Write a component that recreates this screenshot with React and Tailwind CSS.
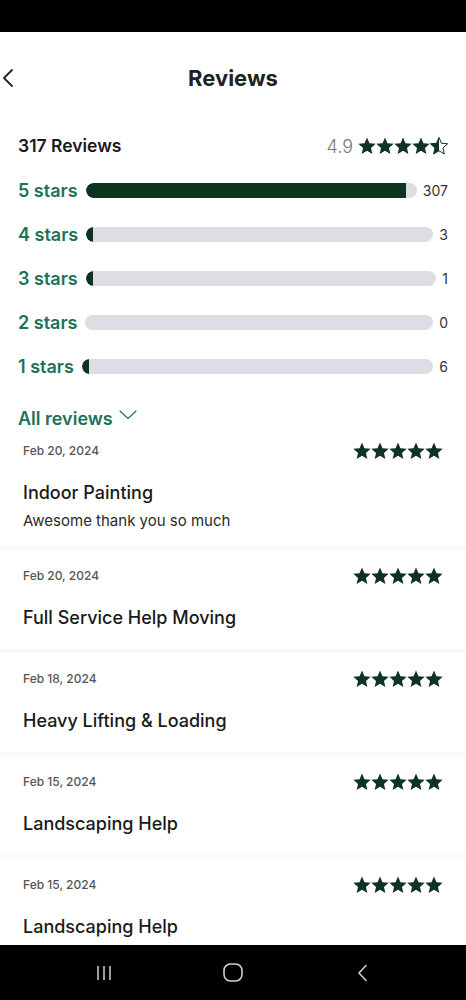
import React from 'react';

const STAR = 'M12 1.8l2.95 6.9 7.45.65-5.65 4.9 1.7 7.3L12 17.7l-6.45 3.85 1.7-7.3L1.6 9.35l7.45-.65z';

const Star = ({ size = 18, half = false, color = '#0e3321' }) => (
  <svg width={size} height={size} viewBox="1.2 1.2 21.6 21.6">
    {half ? (
      <>
        <defs>
          <clipPath id="leftHalf">
            <rect x="0" y="0" width="12" height="24" />
          </clipPath>
        </defs>
        <path d={STAR} fill="none" stroke={color} strokeWidth="1.2" strokeLinejoin="round" />
        <path d={STAR} fill={color} clipPath="url(#leftHalf)" />
      </>
    ) : (
      <path d={STAR} fill={color} />
    )}
  </svg>
);

const breakdown = [
  { label: '5 stars', count: 307 },
  { label: '4 stars', count: 3 },
  { label: '3 stars', count: 1 },
  { label: '2 stars', count: 0 },
  { label: '1 stars', count: 6 },
];

const reviews = [
  { date: 'Feb 20, 2024', title: 'Indoor Painting', body: 'Awesome thank you so much' },
  { date: 'Feb 20, 2024', title: 'Full Service Help Moving' },
  { date: 'Feb 18, 2024', title: 'Heavy Lifting & Loading' },
  { date: 'Feb 15, 2024', title: 'Landscaping Help' },
  { date: 'Feb 15, 2024', title: 'Landscaping Help' },
];

const total = 317;

export default function App() {
  return (
    <div
      className="w-[466px] h-[1000px] flex flex-col bg-white overflow-hidden"
      style={{ fontFamily: 'Inter, "Noto Sans", sans-serif' }}
    >
      {/* status bar */}
      <div className="h-[32px] bg-black shrink-0" />

      <div className="flex-1 overflow-hidden">
        {/* header */}
        <div className="h-[92px] flex items-center relative">
          <svg className="absolute left-[1px]" width="14" height="20" viewBox="0 0 14 20">
            <path d="M11 2 L3 10 L11 18" fill="none" stroke="#222" strokeWidth="1.8" strokeLinecap="round" strokeLinejoin="round" />
          </svg>
          <div className="w-full text-center text-[22px] font-bold text-[#222]">Reviews</div>
        </div>

        {/* summary */}
        <div className="px-[18px]">
          <div className="h-[44px] flex items-center justify-between">
            <span className="text-[17.5px] font-semibold text-[#1a1a1a]">317 Reviews</span>
            <div className="flex items-center gap-[5px]">
              <span className="text-[18px] font-light text-[#777]">4.9</span>
              <div className="flex">
                <Star size={18} />
                <Star size={18} />
                <Star size={18} />
                <Star size={18} />
                <Star size={18} half />
              </div>
            </div>
          </div>

          {breakdown.map(({ label, count }) => (
            <div key={label} className="h-[44px] flex items-center">
              <span className="text-[18px] font-semibold text-[#1d7256] mr-[8px]">{label}</span>
              <div className="flex-1 h-[15px] rounded-full bg-[#dcdee3] overflow-hidden flex">
                {count > 0 && (
                  <div
                    className="h-full rounded-l-full bg-[#0e3321]"
                    style={{ width: `max(7px, ${(count / total) * 100}%)` }}
                  />
                )}
              </div>
              <span className="text-[14px] text-[#333] ml-[6px]">{count}</span>
            </div>
          ))}

          <div className="mt-[18px] h-[24px] flex items-center gap-[6px]">
            <span className="text-[18px] font-semibold text-[#1d7256]">All reviews</span>
            <svg width="18" height="10" viewBox="0 0 18 10" className="-mt-[6px]">
              <path d="M1 1 L9 8.5 L17 1" fill="none" stroke="#1d7256" strokeWidth="1.1" strokeLinecap="round" strokeLinejoin="round" />
            </svg>
          </div>
        </div>

        {/* review list */}
        <div>
          {reviews.map((r, i) => (
            <div key={i}>
              {i > 0 && <div className="h-[4px] bg-[#f9f9f9]" />}
              <div className={`px-[23px] ${i === 0 ? 'pt-[11px] pb-[15px]' : 'pt-[16px] pb-[19px]'}`}>
                <div className="h-[20px] flex items-center justify-between">
                  <span className="text-[12px] font-medium text-[#555]">{r.date}</span>
                  <div className="flex">
                    {[0, 1, 2, 3, 4].map((s) => (
                      <Star key={s} size={18} />
                    ))}
                  </div>
                </div>
                <div className="mt-[20px] h-[24px] leading-[24px] text-[18px] font-medium text-[#1a1a1a]">{r.title}</div>
                {r.body && (
                  <div className="mt-[6px] h-[20px] leading-[20px] text-[15px] text-[#2a2a2a]">{r.body}</div>
                )}
              </div>
            </div>
          ))}
        </div>
      </div>

      {/* nav bar */}
      <div className="h-[55px] bg-black shrink-0 flex items-center justify-center gap-[89px]">
        <div className="w-[40px] flex justify-center">
          <svg width="16" height="16" viewBox="0 0 16 16">
            <path d="M2 1 V15 M8 1 V15 M14 1 V15" stroke="#d0d0d0" strokeWidth="1.5" />
          </svg>
        </div>
        <div className="w-[40px] flex justify-center">
          <svg width="20" height="19" viewBox="0 0 20 19">
            <rect x="1" y="1" width="18" height="17" rx="6.5" fill="none" stroke="#d0d0d0" strokeWidth="1.6" />
          </svg>
        </div>
        <div className="w-[40px] flex justify-center">
          <svg width="12" height="18" viewBox="0 0 12 18">
            <path d="M10 1.5 L3 9 L10 16.5" fill="none" stroke="#d0d0d0" strokeWidth="1.6" strokeLinecap="round" strokeLinejoin="round" />
          </svg>
        </div>
      </div>
    </div>
  );
}
